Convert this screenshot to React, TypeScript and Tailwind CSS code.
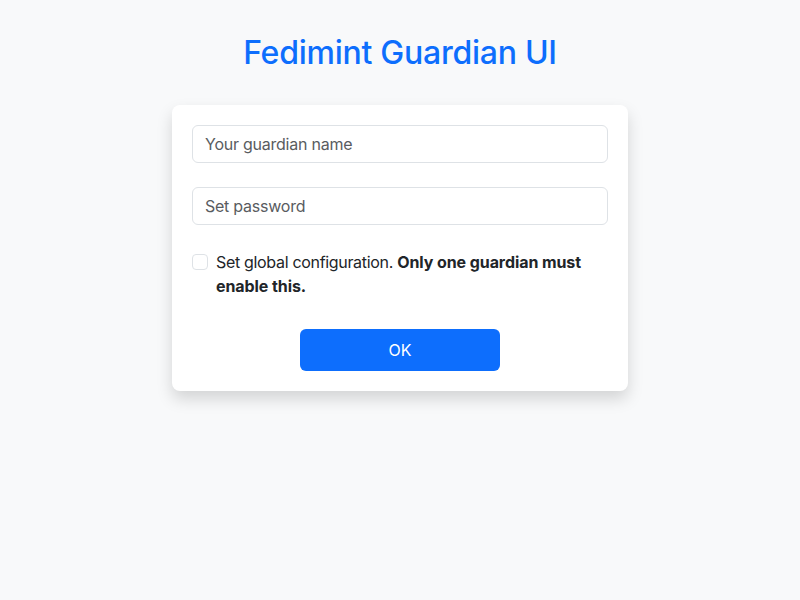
import React from 'react';

export default function App() {
  return (
    <main
      className="min-h-screen w-full bg-[#f8f9fa] flex flex-col items-center text-[#212529]"
      style={{ fontFamily: 'Inter, "Noto Sans", sans-serif' }}
    >
      <h1 className="mt-[34px] mb-[33px] text-[32px] leading-[38px] font-medium tracking-[-0.008em] text-[#0d6efd]">
        Fedimint Guardian UI
      </h1>
      <form className="w-[456px] bg-white rounded-lg shadow-[0_8px_16px_rgba(0,0,0,0.15)] p-5 flex flex-col">
        <input
          type="text"
          placeholder="Your guardian name"
          className="h-[38px] w-full rounded-md border border-[#dee2e6] px-3 text-base tracking-[-0.015em] text-[#212529] placeholder:text-[#595c5f] outline-none"
        />
        <input
          type="password"
          placeholder="Set password"
          className="mt-6 h-[38px] w-full rounded-md border border-[#dee2e6] px-3 text-base tracking-[-0.015em] text-[#212529] placeholder:text-[#595c5f] outline-none"
        />
        <label className="mt-[25px] flex items-start gap-2 text-base leading-6">
          <input
            type="checkbox"
            className="mt-1 h-4 w-4 shrink-0 appearance-none rounded border border-[#dee2e6] bg-white"
          />
          <span className="tracking-[-0.02em]">
            Set global configuration.{' '}
            <b className="font-bold tracking-[-0.005em]">Only one guardian must enable this.</b>
          </span>
        </label>
        <div className="mt-[31px] flex justify-center">
          <button
            type="button"
            className="h-[42px] w-[200px] rounded-md bg-[#0d6efd] text-white text-base"
          >
            OK
          </button>
        </div>
      </form>
    </main>
  );
}
